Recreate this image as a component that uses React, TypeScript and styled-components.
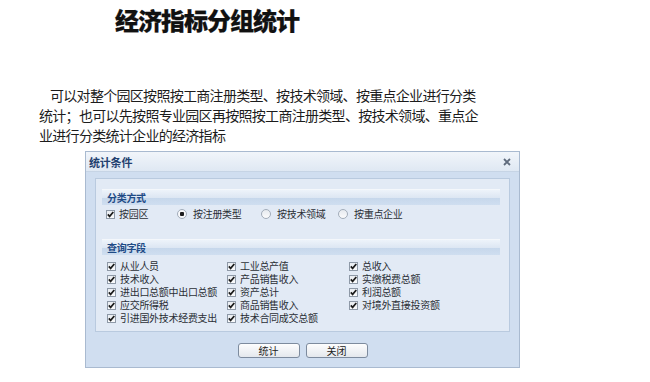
import styled, { createGlobalStyle } from 'styled-components';

const GlobalStyle = createGlobalStyle`
  html, body {
    margin: 0;
    padding: 0;
    background: #fff;
  }
  body {
    width: 650px;
    height: 382px;
    overflow: hidden;
    font-family: "Noto Sans CJK SC", "Noto Sans", sans-serif;
  }
`;

const groupOptions = [
  { label: '按园区', kind: 'check', checked: true, width: 71 },
  { label: '按注册类型', kind: 'radio', checked: true, width: 84 },
  { label: '按技术领域', kind: 'radio', checked: false, width: 77 },
  { label: '按重点企业', kind: 'radio', checked: false, width: 0 },
];

const fields = [
  '从业人员', '技术收入', '进出口总额中出口总额', '应交所得税', '引进国外技术经费支出',
  '工业总产值', '产品销售收入', '资产总计', '商品销售收入', '技术合同成交总额',
  '总收入', '实缴税费总额', '利润总额', '对境外直接投资额',
];

const CheckBox = () => (
  <S.Box>
    <svg width="7" height="7" viewBox="0 0 7 7">
      <polyline points="0.8,3.4 2.6,5.4 6.3,1" fill="none" stroke="#1b1b1b" strokeWidth="1.7" />
    </svg>
  </S.Box>
);

const App = () => {
  return (
    <>
      <GlobalStyle />
      <S.Page>
        <S.Title>经济指标分组统计</S.Title>
        <S.Intro>
          可以对整个园区按照按工商注册类型、按技术领域、按重点企业进行分类统计；也可以先按照专业园区再按照按工商注册类型、按技术领域、重点企业进行分类统计企业的经济指标
        </S.Intro>

        <S.Dialog>
          <S.TitleBar>
            <S.DialogTitle>统计条件</S.DialogTitle>
            <S.Close aria-label="关闭">
              <svg width="8" height="8" viewBox="0 0 8 8">
                <path d="M1 1 L7 7 M7 1 L1 7" stroke="#5f6b7d" strokeWidth="1.8" />
              </svg>
            </S.Close>
          </S.TitleBar>

          <S.Body>
            <S.Panel>
              <S.Group $minHeight={42}>
                <S.GroupHeader>分类方式</S.GroupHeader>
                <S.OptionRow>
                  {groupOptions.map((o) => (
                    <S.Option key={o.label} $width={o.width}>
                      {o.kind === 'check' ? <CheckBox /> : <S.Radio $checked={o.checked} />}
                      <S.Label>{o.label}</S.Label>
                    </S.Option>
                  ))}
                </S.OptionRow>
              </S.Group>

              <S.Group $minHeight={0}>
                <S.GroupHeader>查询字段</S.GroupHeader>
                <S.FieldGrid>
                  {fields.map((f) => (
                    <S.Option key={f} $width={0}>
                      <CheckBox />
                      <S.Label>{f}</S.Label>
                    </S.Option>
                  ))}
                </S.FieldGrid>
              </S.Group>
            </S.Panel>

            <S.Buttons>
              <S.Button type="button">统计</S.Button>
              <S.Button type="button">关闭</S.Button>
            </S.Buttons>
          </S.Body>
        </S.Dialog>
      </S.Page>
    </>
  );
};

const S = {
  Page: styled.div`
    width: 650px;
    height: 382px;
    display: flex;
    flex-direction: column;
    background: #fff;
  `,
  Title: styled.h1`
    margin: 0;
    padding: 6px 0 0 115px;
    font-size: 24px;
    line-height: 28px;
    font-weight: 900;
    letter-spacing: -1px;
    color: #111;
    -webkit-text-stroke: 0.25px #111;
  `,
  Intro: styled.p`
    margin: 51px 0 0 39px;
    width: 442px;
    font-size: 14px;
    line-height: 20px;
    letter-spacing: -0.7px;
    text-indent: 11px;
    color: #1c1c1c;
  `,
  Dialog: styled.section`
    margin: 6px 0 0 85px;
    width: 435px;
    box-sizing: border-box;
    border: 1px solid #a9bad0;
    background: #d0def0;
    display: flex;
    flex-direction: column;
  `,
  TitleBar: styled.div`
    height: 19px;
    display: flex;
    align-items: center;
    justify-content: space-between;
    padding: 0 8px 0 3px;
    background: linear-gradient(#f1f5fa, #dfe8f3);
    border-bottom: 1px solid #c6d4e5;
  `,
  DialogTitle: styled.span`
    font-size: 11px;
    font-weight: 700;
    color: #22406f;
    letter-spacing: -0.2px;
  `,
  Close: styled.span`
    display: flex;
    width: 9px;
    height: 9px;
    align-items: center;
    justify-content: center;
  `,
  Body: styled.div`
    padding: 6px 9px 9px;
    display: flex;
    flex-direction: column;
  `,
  Panel: styled.div`
    border: 1px solid #b9cadf;
    background: #e2eaf5;
    padding: 10px 9px 6px 6px;
    display: flex;
    flex-direction: column;
    gap: 8px;
  `,
  Group: styled.div<{ $minHeight: number }>`
    min-height: ${({ $minHeight }) => $minHeight}px;
    display: flex;
    flex-direction: column;
  `,
  GroupHeader: styled.div`
    height: 15px;
    line-height: 15px;
    padding-left: 5px;
    font-size: 10px;
    font-weight: 700;
    color: #1f4b86;
    letter-spacing: -0.3px;
    background: linear-gradient(#edf3fa 0%, #dde7f3 50%, #c6d7eb 52%, #cfdef0 100%);
    border-top: 1px solid #f4f7fb;
  `,
  OptionRow: styled.div`
    display: flex;
    align-items: center;
    height: 12px;
    margin-top: 3px;
    padding-left: 4px;
  `,
  Option: styled.div<{ $width: number }>`
    display: flex;
    align-items: center;
    gap: 4px;
    ${({ $width }) => ($width ? `width: ${$width}px;` : '')}
    height: 13px;
  `,
  FieldGrid: styled.div`
    display: grid;
    grid-auto-flow: column;
    grid-template-rows: repeat(5, 13px);
    grid-template-columns: 120px 122px auto;
    margin-top: 5px;
    padding-left: 5px;
  `,
  Box: styled.span`
    flex: none;
    width: 9px;
    height: 9px;
    box-sizing: border-box;
    border: 1px solid #8e99a7;
    background: linear-gradient(#e9edf2, #fafbfc);
    display: flex;
    align-items: center;
    justify-content: center;
  `,
  Radio: styled.span<{ $checked: boolean }>`
    flex: none;
    width: 10px;
    height: 10px;
    box-sizing: border-box;
    border-radius: 50%;
    border: 1px solid #a2adba;
    background: ${({ $checked }) =>
      $checked
        ? 'radial-gradient(circle, #1e1e1e 0 2px, #f7f8fa 2.5px)'
        : 'linear-gradient(#e6eaef, #fbfbfc)'};
    margin-right: 2px;
  `,
  Label: styled.span`
    display: block;
    height: 13px;
    font-family: "Liberation Sans", "Noto Sans CJK SC", sans-serif;
    font-size: 10px;
    line-height: 13px;
    letter-spacing: -0.3px;
    color: #2b2f36;
    white-space: nowrap;
  `,
  Buttons: styled.div`
    display: flex;
    justify-content: center;
    gap: 6px;
    margin-top: 11px;
  `,
  Button: styled.button`
    width: 62px;
    height: 15px;
    padding: 0;
    box-sizing: border-box;
    border: 1px solid #7d8b9e;
    border-radius: 3px;
    background: linear-gradient(#fdfdfe, #e4e8ed);
    font-family: "Noto Sans CJK SC", "Noto Sans", sans-serif;
    font-size: 10px;
    line-height: 13px;
    color: #222;
  `,
};

export default App;
